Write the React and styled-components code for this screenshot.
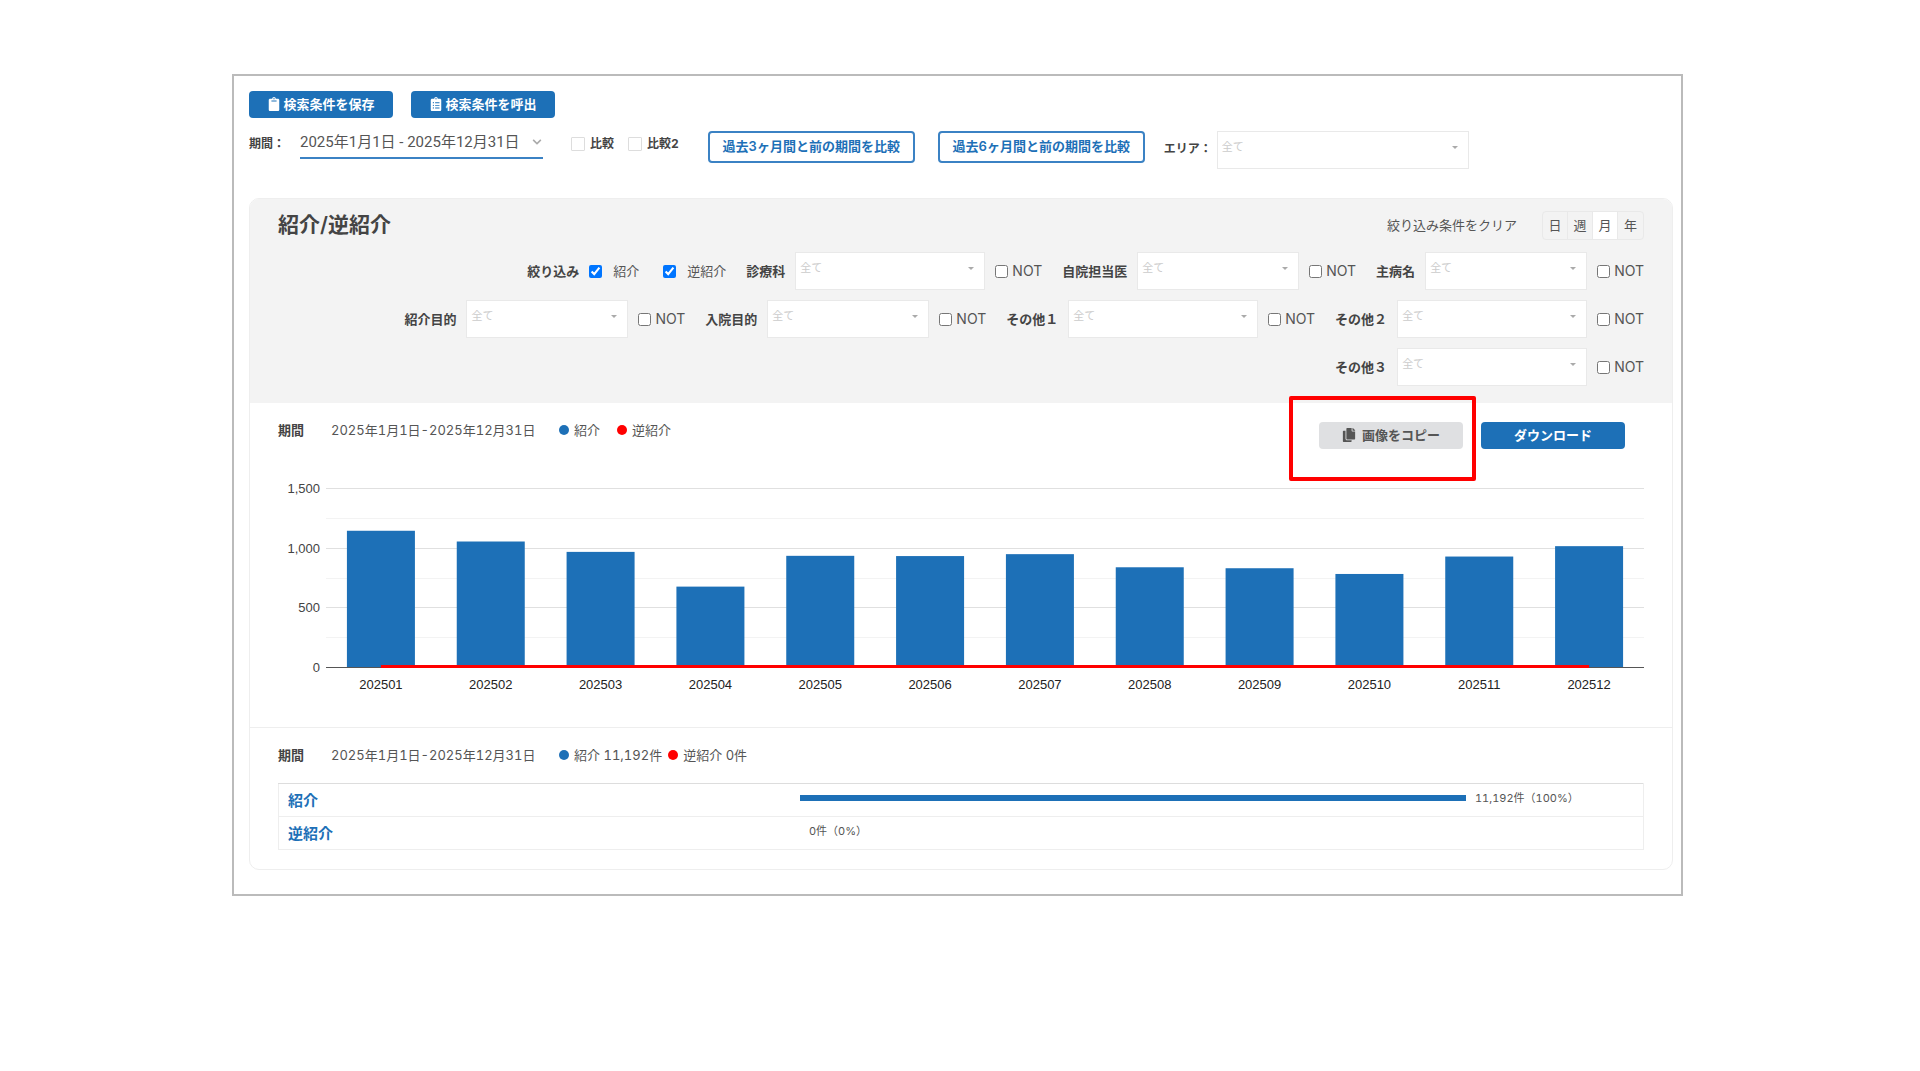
import React, { useState } from "react";
import styled, { createGlobalStyle, css } from "styled-components";
import { FaClipboard, FaClipboardList, FaCopy, FaChevronDown } from "react-icons/fa";

const MONTHS = [
  { label: "202501", value: 1150 },
  { label: "202502", value: 1060 },
  { label: "202503", value: 973 },
  { label: "202504", value: 682 },
  { label: "202505", value: 940 },
  { label: "202506", value: 938 },
  { label: "202507", value: 954 },
  { label: "202508", value: 844 },
  { label: "202509", value: 836 },
  { label: "202510", value: 788 },
  { label: "202511", value: 934 },
  { label: "202512", value: 1021 },
];

const FILTER_ROWS = [
  [
    { id: "dept", label: "診療科", wide: true },
    { id: "doctor", label: "自院担当医" },
    { id: "disease", label: "主病名" },
  ],
  [
    { id: "purpose", label: "紹介目的" },
    { id: "admission", label: "入院目的" },
    { id: "other1", label: "その他１", wide: true },
    { id: "other2", label: "その他２", wide: true },
  ],
  [{ id: "other3", label: "その他３", wide: true }],
];

const SUMMARY = [
  { label: "紹介", percent: 100, text: "11,192件（100%）" },
  { label: "逆紹介", percent: 0, text: "0件（0%）" },
];

const PERIOD = "2025年1月1日-2025年12月31日";

const SelectAll = ({ id, width }) => (
  <SelectWrap $width={width}>
    <Select id={id} defaultValue="">
      <option value="">全て</option>
    </Select>
  </SelectWrap>
);

const Filter = ({ id, label, wide }) => (
  <FilterGroup>
    <FilterLabel htmlFor={id}>{label}</FilterLabel>
    <SelectAll id={id} width={wide ? 190 : 162} />
    <NotLabel>
      <Checkbox type="checkbox" />
      NOT
    </NotLabel>
  </FilterGroup>
);

// 月別の棒グラフ（紹介）と折れ線（逆紹介）
const Chart = () => {
  const left = 48;
  const right = 1366;
  const base = 190;
  const scale = 179 / 1500;
  const step = (right - left) / MONTHS.length;
  const center = (i) => left + step * (i + 0.5);

  return (
    <ChartSvg viewBox="0 0 1366 224" role="img" aria-label="紹介/逆紹介">
      {[1500, 1250, 1000, 750, 500, 250].map((v) => (
        <rect
          key={v}
          x={left}
          y={Math.round(base - v * scale) - 1}
          width={right - left}
          height="1"
          fill={v % 500 === 0 ? "#e0e0e0" : "#f3f3f3"}
        />
      ))}
      {[1500, 1000, 500, 0].map((v) => (
        <AxisText key={v} x="42" y={base - v * scale + 4} textAnchor="end">
          {v.toLocaleString("en-US")}
        </AxisText>
      ))}
      {MONTHS.map((m, i) => (
        <g key={m.label}>
          <rect x={center(i) - 34} y={base - m.value * scale} width="68" height={m.value * scale} fill="#1d70b7" />
          <AxisText x={center(i)} y="211" textAnchor="middle" $dark>
            {m.label}
          </AxisText>
        </g>
      ))}
      <rect x={left} y={base - 1} width={right - left} height="1" fill="#555" />
      <rect x={center(0)} y={base - 3} width={center(11) - center(0)} height="3" fill="#ff0000" />
    </ChartSvg>
  );
};

const App = () => {
  const [unit, setUnit] = useState("月");

  return (
    <Page>
      <GlobalStyle />
      <Panel>
        <ButtonRow>
          <Button>
            <FaClipboard />
            検索条件を保存
          </Button>
          <Button>
            <FaClipboardList />
            検索条件を呼出
          </Button>
        </ButtonRow>

        <SearchRow>
          <SearchLabel as="span">期間：</SearchLabel>
          <DateButton type="button">
            2025年1月1日 - 2025年12月31日
            <FaChevronDown />
          </DateButton>
          <CompareGroup>
            <CompareLabel>
              <PlainCheckbox type="checkbox" />
              比較
            </CompareLabel>
            <CompareLabel>
              <PlainCheckbox type="checkbox" />
              比較2
            </CompareLabel>
          </CompareGroup>
          <OutlineButton>過去3ヶ月間と前の期間を比較</OutlineButton>
          <OutlineButton>過去6ヶ月間と前の期間を比較</OutlineButton>
          <AreaGroup>
            <SearchLabel htmlFor="area">エリア：</SearchLabel>
            <SelectAll id="area" width={252} />
          </AreaGroup>
        </SearchRow>

        <Card>
          <CardHeader>
            <TitleRow>
              <Title>紹介/逆紹介</Title>
              <ClearButton type="button">絞り込み条件をクリア</ClearButton>
              <UnitGroup>
                {["日", "週", "月", "年"].map((u) => (
                  <UnitButton key={u} type="button" $active={u === unit} onClick={() => setUnit(u)}>
                    {u}
                  </UnitButton>
                ))}
              </UnitGroup>
            </TitleRow>
            <FilterRows>
              {FILTER_ROWS.map((row, i) => (
                <FilterRow key={i}>
                  {i === 0 && (
                    <KindGroup>
                      <strong>絞り込み</strong>
                      <KindLabel>
                        <Checkbox type="checkbox" defaultChecked />
                        紹介
                      </KindLabel>
                      <KindLabel>
                        <Checkbox type="checkbox" defaultChecked />
                        逆紹介
                      </KindLabel>
                    </KindGroup>
                  )}
                  {row.map((f) => (
                    <Filter key={f.id} {...f} />
                  ))}
                </FilterRow>
              ))}
            </FilterRows>
          </CardHeader>

          <ChartSection>
            <SectionHead>
              <PeriodLabel>期間</PeriodLabel>
              <Period>{PERIOD}</Period>
              <Legend $gap={17}>
                <LegendItem $color="#1d70b7">紹介</LegendItem>
                <LegendItem $color="#ff0000">逆紹介</LegendItem>
              </Legend>
              <Actions>
                <CopyMark>
                  <Button $gray>
                    <FaCopy />
                    画像をコピー
                  </Button>
                </CopyMark>
                <Button>ダウンロード</Button>
              </Actions>
            </SectionHead>
            <Chart />
          </ChartSection>

          <SummarySection>
            <SectionHead>
              <PeriodLabel>期間</PeriodLabel>
              <Period>{PERIOD}</Period>
              <Legend $gap={6}>
                <LegendItem $color="#1d70b7">紹介 11,192件</LegendItem>
                <LegendItem $color="#ff0000">逆紹介 0件</LegendItem>
              </Legend>
            </SectionHead>
            <SummaryTable>
              <tbody>
                {SUMMARY.map((s) => (
                  <tr key={s.label}>
                    <SummaryHead scope="row">{s.label}</SummaryHead>
                    <SummaryCell>
                      <BarRow>
                        <Bar style={{ width: `${s.percent * 0.79}%` }} />
                        <BarText>{s.text}</BarText>
                      </BarRow>
                    </SummaryCell>
                  </tr>
                ))}
              </tbody>
            </SummaryTable>
          </SummarySection>
        </Card>
      </Panel>
    </Page>
  );
};

export default App;

const GlobalStyle = createGlobalStyle`
  * {
    box-sizing: border-box;
  }
  body {
    margin: 0;
    background: #fff;
    color: #555;
    font-family: Inter, "Noto Sans CJK JP", sans-serif;
    font-size: 13px;
    line-height: 20px;
    font-variant-numeric: tabular-nums;
  }
  button, select, input {
    font: inherit;
    color: inherit;
  }
  button {
    cursor: pointer;
  }
`;

const Page = styled.main`
  padding: 74px 237px 0 232px;
`;

const Panel = styled.div`
  border: 2px solid #bbb;
  padding: 15px 8px 24px 15px;
`;

const ButtonRow = styled.div`
  display: flex;
  gap: 18px;
`;

const Button = styled.button`
  display: inline-flex;
  align-items: center;
  justify-content: center;
  gap: ${(p) => (p.$gray ? "6px" : "2px")};
  min-width: 144px;
  height: 27px;
  padding: 0 8px 2px;
  border: none;
  border-radius: 4px;
  font-weight: 600;
  white-space: nowrap;
  color: ${(p) => (p.$gray ? "#555" : "#fff")};
  background: ${(p) => (p.$gray ? "#dfe0e2" : "#1d70b7")};

  svg {
    width: 14px;
    height: 14px;
  }
`;

const SearchRow = styled.div`
  display: flex;
  align-items: flex-start;
  margin-top: 13px;
  height: 39px;
`;

const SearchLabel = styled.label`
  margin-top: 3px;
  min-width: 51px;
  font-size: 12px;
  font-weight: 700;
  color: #444;
`;

const DateButton = styled.button`
  display: flex;
  align-items: center;
  gap: 12px;
  width: 243px;
  height: 28px;
  padding: 0 0 4px;
  border: none;
  border-bottom: 2px solid #3b82c4;
  background: none;
  font-family: Roboto, "Noto Sans CJK JP", sans-serif;
  font-size: 15px;
  white-space: nowrap;

  svg {
    width: 10px;
    height: 10px;
    color: #aaa;
  }
`;

const CompareGroup = styled.div`
  display: flex;
  gap: 14px;
  margin: 3px 29px 0 28px;
`;

const CompareLabel = styled.label`
  display: flex;
  align-items: center;
  gap: 5px;
  font-size: 12px;
  font-weight: 700;
  white-space: nowrap;
  color: #444;
`;

const PlainCheckbox = styled.input`
  appearance: none;
  width: 14px;
  height: 14px;
  margin: 0;
  border: 1px solid #ddd;
  border-radius: 1px;
  background: #fff;
`;

const OutlineButton = styled.button`
  height: 32px;
  width: 207px;
  padding: 0 0 2px;
  margin-right: 23px;
  border: 2px solid #3b82c4;
  border-radius: 4px;
  background: #fff;
  font-weight: 600;
  white-space: nowrap;
  color: #1d70b7;
`;

const AreaGroup = styled.div`
  display: flex;
  margin-left: -4px;

  label {
    margin-top: 8px;
    min-width: 53px;
  }
`;

const SelectWrap = styled.span`
  position: relative;
  display: block;
  width: ${(p) => p.$width}px;

  &::after {
    content: "";
    position: absolute;
    top: 15px;
    right: 11px;
    border: 3px solid transparent;
    border-top-color: #aaa;
    border-bottom: none;
    pointer-events: none;
  }
`;

const Select = styled.select`
  appearance: none;
  display: block;
  width: 100%;
  height: 38px;
  padding: 0 24px 6px 4px;
  border: 1px solid #e9e9e9;
  border-radius: 0;
  background: #fff;
  font-size: 11px;
  color: #ccc;
`;

const Card = styled.section`
  margin-top: 28px;
  border: 1px solid #eee;
  border-radius: 10px;
  overflow: hidden;
`;

const CardHeader = styled.header`
  padding: 11px 28px 17px 28px;
  background: #f3f3f3;
`;

const TitleRow = styled.div`
  display: flex;
  align-items: center;
`;

const Title = styled.h1`
  margin: 0 auto 0 0;
  font-size: 21px;
  line-height: 30px;
  font-weight: 600;
  color: #444;
`;

const ClearButton = styled.button`
  padding: 0;
  border: none;
  background: none;
  margin-right: 25px;
`;

const UnitGroup = styled.div`
  display: flex;
  border: 1px solid #e9e9e9;
  border-radius: 4px;
`;

const UnitButton = styled.button`
  width: 25px;
  height: 27px;
  padding: 0;
  border: none;
  border-right: 1px solid #e9e9e9;
  background: ${(p) => (p.$active ? "#fff" : "none")};

  &:last-child {
    border-right: none;
  }
`;

const FilterRows = styled.div`
  display: flex;
  flex-direction: column;
  gap: 10px;
  margin-top: 12px;
`;

const FilterRow = styled.div`
  display: flex;
  justify-content: flex-end;
  align-items: center;
  gap: 20px;
`;

const FilterGroup = styled.div`
  display: flex;
  align-items: center;
  gap: 10px;
`;

const labelText = css`
  font-weight: 700;
  white-space: nowrap;
  color: #444;
`;

const FilterLabel = styled.label`
  ${labelText}
`;

const NotLabel = styled.label`
  display: flex;
  align-items: center;
  gap: 4px;
  font-size: 14px;
`;

const Checkbox = styled.input`
  width: 13px;
  height: 13px;
  margin: 0;
`;

const KindGroup = styled.div`
  display: flex;
  align-items: center;

  strong {
    ${labelText}
  }
`;

const KindLabel = styled.label`
  display: flex;
  align-items: center;
  gap: 11px;
  margin-left: 10px;

  & + & {
    margin-left: 24px;
  }
`;

const ChartSection = styled.div`
  padding: 17px 28px 25px 28px;
`;

const SectionHead = styled.div`
  display: flex;
  align-items: flex-start;
`;

const PeriodLabel = styled.strong`
  width: 53px;
  ${labelText}
`;

const Period = styled.span`
  width: 228px;
  white-space: nowrap;
`;

const Legend = styled.div`
  display: flex;
  gap: ${(p) => p.$gap}px;
`;

const LegendItem = styled.span`
  display: flex;
  align-items: center;
  gap: 5px;
  white-space: nowrap;

  &::before {
    content: "";
    width: 10px;
    height: 10px;
    border-radius: 50%;
    background: ${(p) => p.$color};
  }
`;

const Actions = styled.div`
  display: flex;
  gap: 18px;
  margin-top: 2px;
  margin-left: auto;
  margin-right: 19px;
`;

// コピー ボタンを囲む赤枠
const CopyMark = styled.div`
  position: relative;

  &::after {
    content: "";
    position: absolute;
    inset: -26px -13px -32px -30px;
    border: 4px solid #ff0000;
    border-radius: 2px;
    pointer-events: none;
  }
`;

const ChartSvg = styled.svg`
  display: block;
  width: 100%;
  margin-top: 29px;
`;

const AxisText = styled.text`
  font-family: "Liberation Sans", sans-serif;
  font-size: 13px;
  fill: ${(p) => (p.$dark ? "#222" : "#444")};
`;

const SummarySection = styled.div`
  padding: 17px 28px 19px 28px;
  border-top: 1px solid #eee;
`;

const SummaryTable = styled.table`
  width: 100%;
  margin-top: 18px;
  border-collapse: collapse;
  table-layout: fixed;
  border: 1px solid #eee;
  border-top-color: #ddd;

  tr + tr {
    border-top: 1px solid #eee;
  }
`;

const SummaryHead = styled.th`
  width: 38.2%;
  height: 33px;
  padding: 2px 0 0 9px;
  text-align: left;
  font-size: 15px;
  font-weight: 600;
  color: #1d70b7;
`;

const SummaryCell = styled.td`
  padding: 0 0 4px;
`;

const BarRow = styled.div`
  display: flex;
  align-items: center;
`;

const Bar = styled.div`
  height: 6px;
  background: #1d70b7;
`;

const BarText = styled.span`
  margin-left: 9px;
  font-size: 11px;
  white-space: nowrap;
`;
